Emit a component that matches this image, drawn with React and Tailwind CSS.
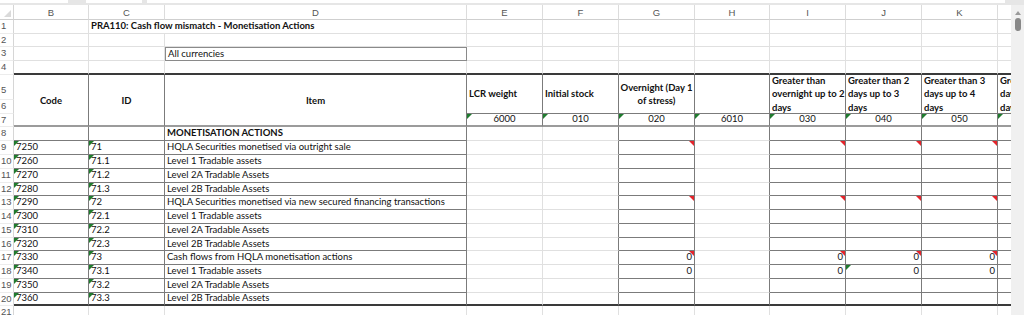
import React from 'react';
import clsx from 'clsx';

// grid placement lookups (full class names so Tailwind picks them up)
const ROW_START = [
  'row-start-1', 'row-start-2', 'row-start-3', 'row-start-4', 'row-start-5', 'row-start-6',
  'row-start-7', 'row-start-8', 'row-start-9', 'row-start-10', 'row-start-11', 'row-start-12',
  'row-start-13', 'row-start-14', 'row-start-15', 'row-start-16', 'row-start-17', 'row-start-18',
  'row-start-19', 'row-start-20', 'row-start-21', 'row-start-22',
];
const COL_START = [
  'col-start-1', 'col-start-2', 'col-start-3', 'col-start-4', 'col-start-5', 'col-start-6',
  'col-start-7', 'col-start-8', 'col-start-9', 'col-start-10', 'col-start-11', 'col-start-12',
];

const RIGHT = {
  light: 'border-r border-r-[#e0e0e0]',
  dark: 'border-r border-r-[#7b7b7b]',
  none: '',
};
const BOTTOM = {
  light: 'border-b border-b-[#e0e0e0]',
  dark: 'border-b border-b-[#7b7b7b]',
  thick: 'border-b-2 border-b-[#3a3a3a]',
  double: 'border-b-2 border-b-[#9b9b9b]',
  none: '',
};

const LETTERS = ['B', 'C', 'D', 'E', 'F', 'G', 'H', 'I', 'J', 'K', ''];

const TOP_HEAD = [
  { c: 3, lines: ['LCR weight'], align: 'left' },
  { c: 4, lines: ['Initial stock'], align: 'left' },
  { c: 5, lines: ['Overnight (Day 1', 'of stress)'], align: 'center' },
  { c: 6, lines: [], align: 'left' },
  { c: 7, lines: ['Greater than', 'overnight up to 2', 'days'], align: 'left' },
  { c: 8, lines: ['Greater than 2', 'days up to 3', 'days'], align: 'left' },
  { c: 9, lines: ['Greater than 3', 'days up to 4', 'days'], align: 'left' },
  { c: 10, lines: ['Greater than 4', 'days up to 5', 'days'], align: 'left' },
];

const CODES = ['6000', '010', '020', '6010', '030', '040', '050', ''];

const ROWS = [
  ['7250', '71', 'HQLA Securities monetised via outright sale'],
  ['7260', '71.1', 'Level 1 Tradable assets'],
  ['7270', '71.2', 'Level 2A Tradable Assets'],
  ['7280', '71.3', 'Level 2B Tradable Assets'],
  ['7290', '72', 'HQLA Securities monetised via new secured financing transactions'],
  ['7300', '72.1', 'Level 1 Tradable assets'],
  ['7310', '72.2', 'Level 2A Tradable Assets'],
  ['7320', '72.3', 'Level 2B Tradable Assets'],
  ['7330', '73', 'Cash flows from HQLA monetisation actions'],
  ['7340', '73.1', 'Level 1 Tradable assets'],
  ['7350', '73.2', 'Level 2A Tradable Assets'],
  ['7360', '73.3', 'Level 2B Tradable Assets'],
];

// columns with boxed input cells in the body
const BOXED = [0, 1, 2, 5, 7, 8, 9, 10];
const FLAGGED = [5, 7, 8, 9];

const rightOf = (r, c) => {
  if (r <= 4 || r === 21) return c === 10 ? 'none' : 'light';
  if (c === 10) return 'none';
  if (r >= 8 && c === 3) return 'light';
  return 'dark';
};

const bottomOf = (r, c) => {
  if (r <= 3) return 'light';
  if (r === 4 || r === 20) return 'thick';
  if (r === 6) return 'dark';
  if (r === 7) return 'double';
  if (r === 21) return 'none';
  return BOXED.includes(c) ? 'dark' : 'light';
};

const Cell = ({ r, c, span, right, bottom, green, red, className, children }) => (
  <div
    className={clsx(
      'relative flex min-w-0 overflow-hidden whitespace-nowrap',
      ROW_START[r],
      COL_START[c + 1],
      span,
      RIGHT[right ?? rightOf(r, c)],
      BOTTOM[bottom ?? bottomOf(r, c)],
      className
    )}
  >
    {green && (
      <span className="absolute left-0 top-0 border-t-[5px] border-r-[5px] border-t-[#1f7b2e] border-r-transparent" />
    )}
    {red && (
      <span className="absolute right-0 top-0 border-t-[5px] border-l-[5px] border-t-[#e5242b] border-l-transparent" />
    )}
    {children}
  </div>
);

const App = () => {
  const cells = [];

  // rows 1-4
  cells.push(
    <Cell key="b1" r={1} c={0} className="items-center" />,
    <Cell key="c1" r={1} c={1} span="col-span-2" right="light" className="items-center pl-[2px] font-bold">
      PRA110: Cash flow mismatch - Monetisation Actions
    </Cell>
  );
  for (let c = 3; c <= 10; c++) cells.push(<Cell key={`r1-${c}`} r={1} c={c} />);
  for (let r = 2; r <= 4; r++) {
    for (let c = 0; c <= 10; c++) {
      if (r === 3 && c === 2) {
        cells.push(
          <Cell key="d3" r={3} c={2} right="none" bottom="none" className="items-center border border-[#8a8a8a] pl-[2px]">
            All currencies
          </Cell>
        );
      } else {
        cells.push(<Cell key={`r${r}-${c}`} r={r} c={c} />);
      }
    }
  }

  // header block rows 5-7
  ['Code', 'ID', 'Item'].forEach((t, c) =>
    cells.push(
      <Cell key={`h-${c}`} r={5} c={c} span="row-span-3" bottom="double" className="items-center justify-center pt-[3px] font-bold">
        {t}
      </Cell>
    )
  );
  TOP_HEAD.forEach(({ c, lines, align }) =>
    cells.push(
      <Cell
        key={`th-${c}`}
        r={5}
        c={c}
        span="row-span-2"
        bottom="dark"
        className={clsx(
          'flex-col justify-center px-[2px] font-bold leading-[13.5px]',
          align === 'center' ? 'items-center' : 'items-start'
        )}
      >
        {lines.map((l) => (
          <span key={l}>{l}</span>
        ))}
      </Cell>
    )
  );
  CODES.forEach((code, i) =>
    cells.push(
      <Cell key={`code-${i}`} r={7} c={i + 3} green className="items-center justify-center">
        {code}
      </Cell>
    )
  );

  // row 8
  for (let c = 0; c <= 10; c++) {
    cells.push(
      <Cell key={`r8-${c}`} r={8} c={c} className="items-center pl-[2px] font-bold">
        {c === 2 ? 'MONETISATION ACTIONS' : null}
      </Cell>
    );
  }

  // body rows 9-20
  ROWS.forEach(([code, id, item], i) => {
    const r = 9 + i;
    const flagged = r === 9 || r === 13 || r === 17;
    const zeros = r === 17 || r === 18;
    for (let c = 0; c <= 10; c++) {
      let content = null;
      if (c === 0) content = code;
      if (c === 1) content = id;
      if (c === 2) content = item;
      const numeric = FLAGGED.includes(c) && zeros;
      cells.push(
        <Cell
          key={`r${r}-${c}`}
          r={r}
          c={c}
          green={c <= 1 || (r === 18 && c === 8)}
          red={flagged && FLAGGED.includes(c)}
          className={clsx('items-center', numeric ? 'justify-end pr-[2px]' : 'pl-[2px]')}
        >
          {numeric ? '0' : content}
        </Cell>
      );
    }
  });

  // row 21 (cut off)
  for (let c = 0; c <= 10; c++) cells.push(<Cell key={`r21-${c}`} r={21} c={c} />);

  return (
    <div className="flex h-[315px] w-[1024px] flex-col overflow-hidden bg-white font-['Lato','Liberation_Sans',sans-serif] text-[9.5px] text-[#111]">
      {/* ribbon remnants */}
      <div className="flex h-[5px] shrink-0 items-start gap-[18px] bg-[#e6e6e6]">
        <div className="h-[3px] w-[68px] bg-white" />
        <div className="h-[3px] w-[56px] bg-white" />
        <div className="-ml-[13px] h-[3px] w-[858px] bg-white" />
      </div>

      <div className="flex min-h-0 flex-1">
        <div className="grid w-[1011px] shrink-0 grid-cols-[14px_75px_76px_302px_76px_76px_76px_75px_76px_76px_76px_13px] grid-rows-[15px_14px_13px_14px_14px_25px_14px_13px_14px_14px_14px_14px_13px_14px_14px_14px_13px_14px_14px_14px_13px_14px]">
          {/* corner */}
          <div className="relative col-start-1 row-start-1 border-b border-r border-b-[#cfcfcf] border-r-[#d6d6d6]">
            <span className="absolute bottom-[2px] right-[2px] border-b-[7px] border-l-[7px] border-b-[#dadada] border-l-transparent" />
          </div>
          {LETTERS.map((l, i) => (
            <div
              key={`col-${i}`}
              className={clsx(
                'row-start-1 flex items-center justify-center border-b border-b-[#cfcfcf] pt-[2px] font-["Liberation_Sans",sans-serif] text-[9.5px] text-[#555]',
                COL_START[i + 1],
                i < 10 && 'border-r border-r-[#dcdcdc]'
              )}
            >
              {l}
            </div>
          ))}
          {/* row numbers */}
          {Array.from({ length: 21 }, (_, k) => k + 1).map((r) => (
            <div
              key={`rn-${r}`}
              className={clsx(
                'col-start-1 flex border-b border-r border-b-[#ececec] border-r-[#d6d6d6] pl-[1px] font-["Liberation_Sans",sans-serif] text-[9.5px] text-[#555]',
                ROW_START[r],
                r === 5 ? 'items-end pb-[2px]' : 'items-center'
              )}
            >
              {r}
            </div>
          ))}
          {cells}
        </div>

        {/* vertical scrollbar */}
        <div className="flex w-[13px] shrink-0 flex-col items-center bg-[#f0f0f0] pt-[6px]">
          <span className="border-b-[4px] border-l-[3px] border-r-[3px] border-b-[#9a9a9a] border-l-transparent border-r-transparent" />
          <span className="mt-[3px] h-[13px] w-[6px] rounded-full bg-[#888]" />
        </div>
      </div>
    </div>
  );
};

export default App;
